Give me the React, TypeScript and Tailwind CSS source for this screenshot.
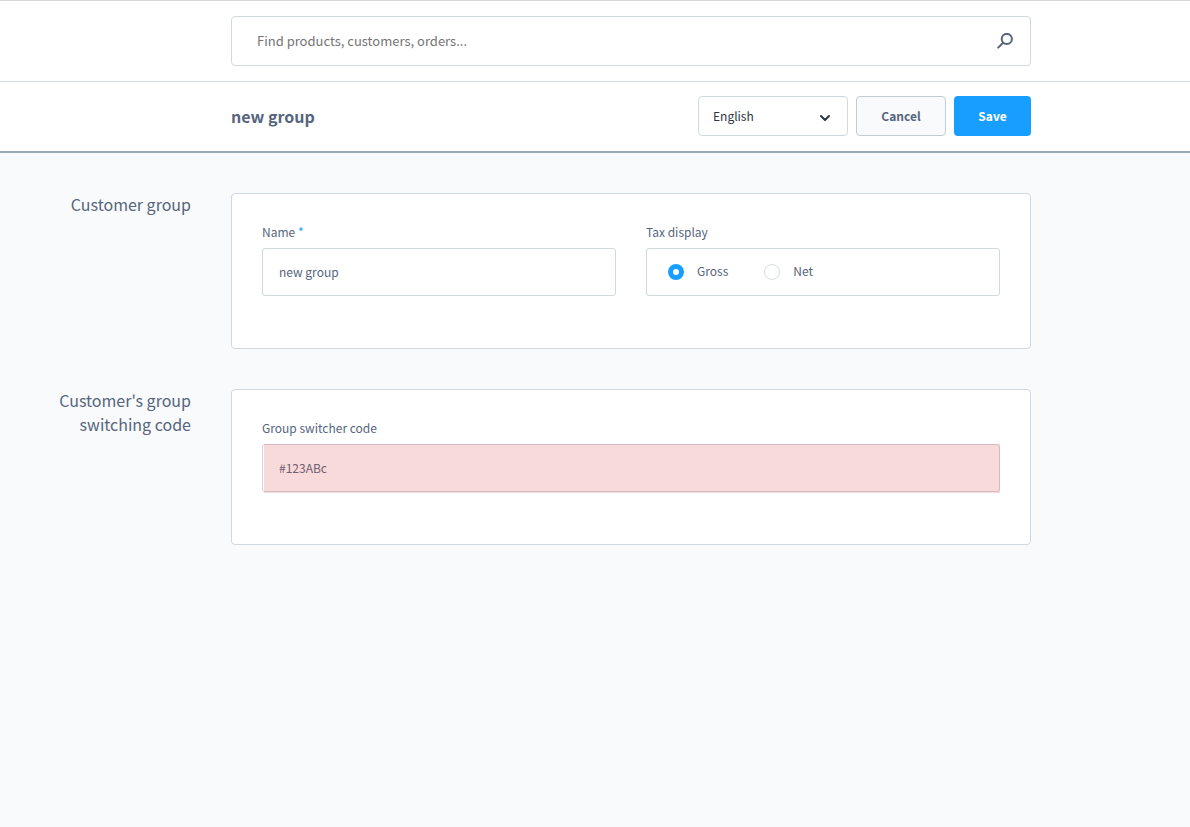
import { useState, type ReactNode } from "react";

function SearchIcon() {
  return (
    <svg width="16" height="16" viewBox="0 0 16 16" fill="none" stroke="#56657d" strokeWidth="2" strokeLinecap="round">
      <circle cx="9.8" cy="6" r="5.1" />
      <path d="M6.1 9.7 1.2 14.6" />
    </svg>
  );
}

function ChevronIcon() {
  return (
    <svg
      width="12"
      height="8"
      viewBox="0 0 12 8"
      fill="none"
      stroke="#2b3643"
      strokeWidth="2"
      strokeLinecap="round"
      strokeLinejoin="round"
      className="pointer-events-none absolute top-[18px] right-[17px]"
    >
      <path d="M2 2l4 4 4-4" />
    </svg>
  );
}

function PageRow({ side, children }: { side?: ReactNode; children: ReactNode }) {
  return (
    <div className="grid grid-cols-[minmax(0,1fr)_minmax(0,800px)_159px]">
      <div className="pr-10">{side}</div>
      {children}
    </div>
  );
}

function Card({ title, children }: { title: string; children: ReactNode }) {
  return (
    <PageRow side={<h2 className="-mt-px ml-auto max-w-[150px] text-right text-base leading-6">{title}</h2>}>
      <section className="rounded border border-[#d1d9e0] bg-white px-[30px] pt-[30px] pb-[52px]">{children}</section>
    </PageRow>
  );
}

function TaxOption({ label, checked, onChange }: { label: string; checked: boolean; onChange: () => void }) {
  return (
    <label className="flex items-center gap-[13px]">
      <input
        type="radio"
        name="tax"
        checked={checked}
        onChange={onChange}
        className="size-4 appearance-none rounded-full border border-[#d8dde6] bg-white checked:border-5 checked:border-[#189eff]"
      />
      <span className="pb-0.5">{label}</span>
    </label>
  );
}

export default function App() {
  const [name, setName] = useState("new group");
  const [tax, setTax] = useState("gross");
  const [code, setCode] = useState("#123ABc");

  return (
    <div className="min-h-screen bg-[#f9fafb] font-['Noto_Sans_CJK_SC',sans-serif] text-xs text-[#56657d]">
      <header className="border-t border-b border-t-[#d8d8d8] border-b-[#d1d9e0] bg-white py-[15px]">
        <PageRow>
          <div className="flex h-[50px] items-center rounded border border-[#d1d9e0] pr-[17px] pl-[25px]">
            <input
              type="search"
              aria-label="Search"
              placeholder="Find products, customers, orders..."
              className="min-w-0 flex-1 text-[13px] outline-none placeholder:text-[#757575]"
            />
            <button type="button" aria-label="Start search">
              <SearchIcon />
            </button>
          </div>
        </PageRow>
      </header>

      <div className="border-b-2 border-[#9aa8b5] bg-white pt-[14px] pb-[15px]">
        <PageRow>
          <div className="flex items-center gap-2">
            <h1 className="flex-1 text-base font-bold">new group</h1>
            <div className="relative">
              <select
                aria-label="Language"
                className="h-10 w-[150px] appearance-none rounded border border-[#d1d9e0] bg-white px-[14px] text-[#2b3643]"
              >
                <option>English</option>
              </select>
              <ChevronIcon />
            </div>
            <button type="button" className="h-10 w-[90px] rounded border border-[#c3ccd6] bg-[#f9fafb] font-bold">
              Cancel
            </button>
            <button type="button" className="h-10 w-[77px] rounded bg-[#189eff] font-bold text-white">
              Save
            </button>
          </div>
        </PageRow>
      </div>

      <main className="flex flex-col gap-10 py-10">
        <Card title="Customer group">
          <div className="grid grid-cols-2 gap-[30px]">
            <div>
              <label htmlFor="name" className="mb-2 block leading-4">
                Name <span className="text-[#189eff]">*</span>
              </label>
              <input
                id="name"
                value={name}
                onChange={(e) => setName(e.target.value)}
                className="block h-12 w-full rounded-[3px] border border-[#d1d9e0] px-4 pb-0.5"
              />
            </div>
            <fieldset>
              <legend className="mb-2 leading-4">Tax display</legend>
              <div className="flex h-12 items-center gap-9 rounded-[3px] border border-[#d1d9e0] px-[21px]">
                <TaxOption label="Gross" checked={tax === "gross"} onChange={() => setTax("gross")} />
                <TaxOption label="Net" checked={tax === "net"} onChange={() => setTax("net")} />
              </div>
            </fieldset>
          </div>
        </Card>

        <Card title="Customer's group switching code">
          <label htmlFor="code" className="mb-2 block leading-4">
            Group switcher code
          </label>
          <div className="relative">
            <input
              id="code"
              value={code}
              onChange={(e) => setCode(e.target.value)}
              className="block h-12 w-full rounded-[3px] border border-[#d1d9e0] px-4 pb-0.5"
            />
            {/* highlight over the field */}
            <div className="pointer-events-none absolute top-0 right-0 -bottom-px left-0.5 bg-[#de4848]/20" />
          </div>
        </Card>
      </main>
    </div>
  );
}
